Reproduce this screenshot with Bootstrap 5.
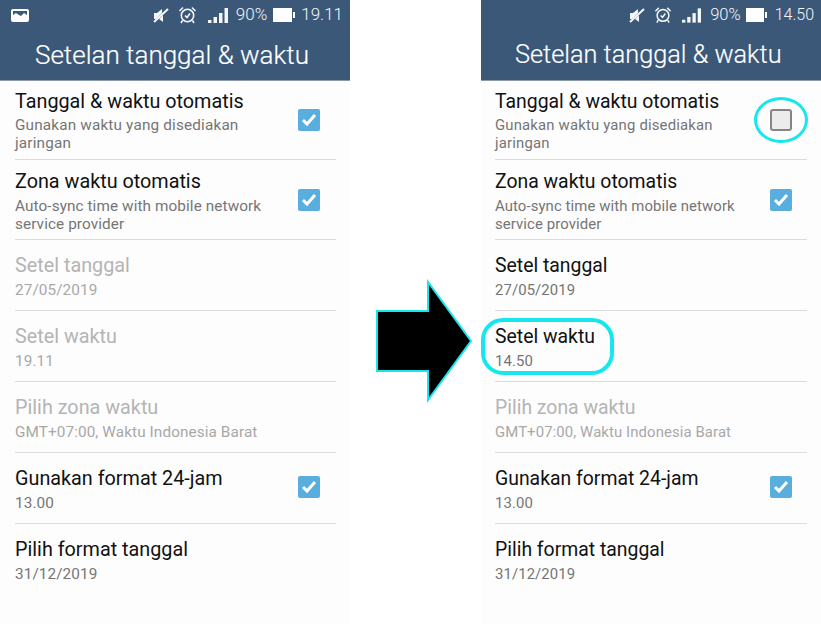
<!DOCTYPE html>
<html lang="en">
<head>
    <meta charset="UTF-8" />
    <meta name="viewport" content="width=device-width, initial-scale=1" />
    <title>Setelan tanggal & waktu</title>
    <link href="https://cdn.jsdelivr.net/npm/bootstrap@5.3.2/dist/css/bootstrap.min.css" rel="stylesheet" />
    <style>
        body { background: #fff; font-family: Roboto, "Liberation Sans", sans-serif; overflow: hidden; }
        .page-wrap { width: 821px; height: 624px; }
        .phone { background: #fdfdfd; height: 624px; flex: none; }
        .phone-left { width: 350px; }
        .phone-right { width: 340px; }
        .arrow-col { width: 131px; flex: none; padding-left: 25px; padding-top: 279px; }
        .phone-head { background: #3b5878; height: 81px; border-bottom: 1px solid #8c9aa8; color: #fff; }
        .status-bar { height: 30px; font-size: 17px; font-weight: 300; padding-right: 7px; color: #f4f6f8; }
        .status-bar svg { display: block; flex: none; }
        .img-icon { margin-left: 11px; }
        .mute-icon { margin-right: 9px; }
        .bars-icon { margin-left: 11px; }
        .pct { margin-left: 8px; margin-right: 6px; }
        .clock { margin-left: 6px; font-size: 17px; }
        .phone-right .status-bar { font-size: 16.500px; }
        .phone-right .bars-icon { margin-left: 10px; }
        .phone-right .pct { margin-left: 9px; margin-right: 5px; }
        .phone-right .clock { margin-left: 8px; font-size: 16px; }
        .head-title { font-size: 26px; line-height: 50px; padding-left: 35px; white-space: nowrap; font-weight: 300; -webkit-text-stroke: .2px #fff; }
        .phone-right .head-title { padding-left: 34px; font-size: 25.300px; }
        .set-list { padding: 0 14px 0 15px; }
        .phone-right .set-list { padding: 0 14px 0 14px; }
        .set-row { border-bottom: 1px solid #dcdcdc; height: 71px; padding-top: 13px; position: relative; }
        .set-row.tall { height: 80px; padding-top: 9px; }
        .set-row.first { height: 79px; padding-top: 8px; }
        .set-row:last-child { border-bottom: 0; }
        .set-title { font-size: 19.800px; line-height: 26px; color: #111; white-space: nowrap; }
        .set-sub { font-size: 15.300px; line-height: 18px; color: #757575; margin-top: 2px; letter-spacing: .1px; white-space: nowrap; }
        .first .set-sub { margin-top: 1px; letter-spacing: .17px; }
        .phone-right .set-title { font-size: 19.400px; }
        .phone-right .set-sub { font-size: 14.900px; }
        .off .set-title { color: #b4b4b4; }
        .off .set-sub { color: #a8a8a8; }
        .tick-box { width: 22px; height: 22px; border-radius: 2px; background: #5aaede; flex: none; margin-right: 16px; margin-top: 10px; position: relative; }
        .first .tick-box, .tall .tick-box { margin-top: 20px; }
        .phone-right .tick-box { margin-right: 15px; }
        .tick-box.empty { background: #ececec; border: 2px solid #858585; border-radius: 3px; }
        .ring-mark { position: absolute; left: -18px; top: -14px; width: 54px; height: 46px; border: 3px solid #16e6ee; border-radius: 50%; }
        .pill-mark { position: absolute; left: -14px; top: 7px; width: 133px; height: 57px; border: 4px solid #16e6ee; border-radius: 22px; }
    </style>
</head>
<body>
<div class="page-wrap d-flex">

    <div class="phone phone-left">
        <div class="phone-head">
            <div class="status-bar d-flex align-items-center">
                <svg class="img-icon me-auto" width="18" height="13" viewBox="0 0 18 13"><rect x="1" y="1" width="16" height="11" rx="1" fill="#3b5878" stroke="#fff" stroke-width="2"/><path d="M2 11V6l3-2 3 2 2 1 3-3 3 2v5z" fill="#fff"/></svg>
                <svg class="mute-icon" width="16" height="17" viewBox="0 0 16 17"><path d="M1 6h3l5-4v4L3 12H1z" fill="#f4f6f8"/><path d="M10 8v7l-4-3z" fill="#f4f6f8"/><path d="M1 15 15 2" stroke="#f4f6f8" stroke-width="2"/></svg>
                <svg width="19" height="18" viewBox="0 0 19 18" fill="none" stroke="#f4f6f8" stroke-width="1.6"><circle cx="9.500" cy="9.500" r="6.200"/><path d="M7 9.500l2 2 3-4M1.500 5 5 1.500M17.500 5 14 1.500M4.500 14.500 3 17M14.500 14.500 16 17"/></svg>
                <svg class="bars-icon" width="20" height="17" viewBox="0 0 20 17" fill="#f4f6f8"><rect x="0" y="13" width="3.500" height="3"/><rect x="5.500" y="10" width="3.500" height="6"/><rect x="11" y="6" width="3.500" height="10"/><rect x="16.500" y="1" width="3.500" height="15"/></svg>
                <span class="pct">90%</span>
                <svg width="22" height="14" viewBox="0 0 22 14" fill="#fff"><rect width="19" height="14"/><rect x="20" y="4" width="2" height="6"/></svg>
                <span class="clock">19.11</span>
            </div>
            <div class="head-title">Setelan tanggal &amp; waktu</div>
        </div>
        <div class="set-list">
            <div class="set-row first d-flex">
                <div class="flex-grow-1">
                    <div class="set-title">Tanggal &amp; waktu otomatis</div>
                    <div class="set-sub">Gunakan waktu yang disediakan<br>jaringan</div>
                </div>
                <div class="tick-box d-flex align-items-center justify-content-center"><svg width="16" height="14" viewBox="0 0 16 14"><path d="M2 7l4 4 8-9" fill="none" stroke="#fff" stroke-width="3"/></svg></div>
            </div>
            <div class="set-row tall d-flex">
                <div class="flex-grow-1">
                    <div class="set-title">Zona waktu otomatis</div>
                    <div class="set-sub">Auto-sync time with mobile network<br>service provider</div>
                </div>
                <div class="tick-box d-flex align-items-center justify-content-center"><svg width="16" height="14" viewBox="0 0 16 14"><path d="M2 7l4 4 8-9" fill="none" stroke="#fff" stroke-width="3"/></svg></div>
            </div>
            <div class="set-row off"><div class="set-title">Setel tanggal</div><div class="set-sub">27/05/2019</div></div>
            <div class="set-row off"><div class="set-title">Setel waktu</div><div class="set-sub">19.11</div></div>
            <div class="set-row off"><div class="set-title">Pilih zona waktu</div><div class="set-sub">GMT+07:00, Waktu Indonesia Barat</div></div>
            <div class="set-row d-flex">
                <div class="flex-grow-1">
                    <div class="set-title">Gunakan format 24-jam</div>
                    <div class="set-sub">13.00</div>
                </div>
                <div class="tick-box d-flex align-items-center justify-content-center"><svg width="16" height="14" viewBox="0 0 16 14"><path d="M2 7l4 4 8-9" fill="none" stroke="#fff" stroke-width="3"/></svg></div>
            </div>
            <div class="set-row"><div class="set-title">Pilih format tanggal</div><div class="set-sub">31/12/2019</div></div>
        </div>
    </div>

    <div class="arrow-col">
        <svg class="d-block" width="98" height="124" viewBox="0 0 98 124"><path d="M2 32H53V3L96 62 53 121V92H2z" fill="#000" stroke="#16e6ee" stroke-width="2"/></svg>
    </div>

    <div class="phone phone-right">
        <div class="phone-head">
            <div class="status-bar d-flex align-items-center">
                <svg class="mute-icon ms-auto" width="16" height="17" viewBox="0 0 16 17"><path d="M1 6h3l5-4v4L3 12H1z" fill="#f4f6f8"/><path d="M10 8v7l-4-3z" fill="#f4f6f8"/><path d="M1 15 15 2" stroke="#f4f6f8" stroke-width="2"/></svg>
                <svg width="18" height="18" viewBox="0 0 19 18" fill="none" stroke="#f4f6f8" stroke-width="1.6"><circle cx="9.500" cy="9.500" r="6.200"/><path d="M7 9.500l2 2 3-4M1.500 5 5 1.500M17.500 5 14 1.500M4.500 14.500 3 17M14.500 14.500 16 17"/></svg>
                <svg class="bars-icon" width="19" height="17" viewBox="0 0 20 17" fill="#f4f6f8"><rect x="0" y="13" width="3.500" height="3"/><rect x="5.500" y="10" width="3.500" height="6"/><rect x="11" y="6" width="3.500" height="10"/><rect x="16.500" y="1" width="3.500" height="15"/></svg>
                <span class="pct">90%</span>
                <svg width="21" height="14" viewBox="0 0 21 14" fill="#fff"><rect width="18" height="14"/><rect x="19" y="4" width="2" height="6"/></svg>
                <span class="clock">14.50</span>
            </div>
            <div class="head-title">Setelan tanggal &amp; waktu</div>
        </div>
        <div class="set-list">
            <div class="set-row first d-flex">
                <div class="flex-grow-1">
                    <div class="set-title">Tanggal &amp; waktu otomatis</div>
                    <div class="set-sub">Gunakan waktu yang disediakan<br>jaringan</div>
                </div>
                <div class="tick-box empty"><span class="ring-mark"></span></div>
            </div>
            <div class="set-row tall d-flex">
                <div class="flex-grow-1">
                    <div class="set-title">Zona waktu otomatis</div>
                    <div class="set-sub">Auto-sync time with mobile network<br>service provider</div>
                </div>
                <div class="tick-box d-flex align-items-center justify-content-center"><svg width="16" height="14" viewBox="0 0 16 14"><path d="M2 7l4 4 8-9" fill="none" stroke="#fff" stroke-width="3"/></svg></div>
            </div>
            <div class="set-row"><div class="set-title">Setel tanggal</div><div class="set-sub">27/05/2019</div></div>
            <div class="set-row"><span class="pill-mark"></span><div class="set-title">Setel waktu</div><div class="set-sub">14.50</div></div>
            <div class="set-row off"><div class="set-title">Pilih zona waktu</div><div class="set-sub">GMT+07:00, Waktu Indonesia Barat</div></div>
            <div class="set-row d-flex">
                <div class="flex-grow-1">
                    <div class="set-title">Gunakan format 24-jam</div>
                    <div class="set-sub">13.00</div>
                </div>
                <div class="tick-box d-flex align-items-center justify-content-center"><svg width="16" height="14" viewBox="0 0 16 14"><path d="M2 7l4 4 8-9" fill="none" stroke="#fff" stroke-width="3"/></svg></div>
            </div>
            <div class="set-row"><div class="set-title">Pilih format tanggal</div><div class="set-sub">31/12/2019</div></div>
        </div>
    </div>

</div>
<script src="https://cdn.jsdelivr.net/npm/bootstrap@5.3.2/dist/js/bootstrap.bundle.min.js"></script>
</body>
</html>
